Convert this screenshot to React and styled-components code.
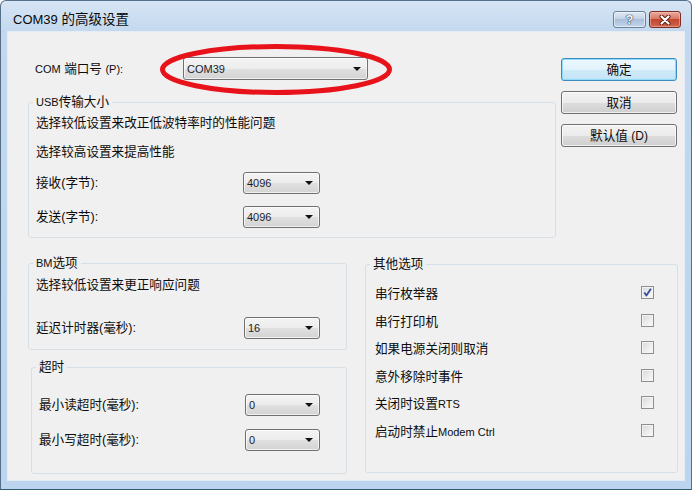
import React from 'react';
import styled, { createGlobalStyle, css } from 'styled-components';

const GlobalStyle = createGlobalStyle`
  html, body { margin: 0; padding: 0; background: #ffffff; }
  body {
    font-family: "Liberation Sans", "Noto Sans CJK SC", sans-serif;
    font-size: 12.6px;
    color: #0c0c0c;
  }
`;

const Window = styled.div`
  position: relative;
  width: 692px;
  height: 490px;
  box-sizing: border-box;
  border: 1px solid #566f88;
  border-bottom-color: #2d5b70;
  border-radius: 6px 6px 0 0;
  background: linear-gradient(180deg, #d6e5f5 0px, #c3d8ee 31px, #bcd4ed 100%);
  padding: 0 7px 9px 7px;
  display: flex;
  flex-direction: column;
  overflow: hidden;
`;

const TitleBar = styled.div`
  height: 31px;
  box-sizing: border-box;
  padding-top: 6px;
  display: flex;
  align-items: center;
  flex: none;
`;

const TitleText = styled.div`
  margin-left: 5px;
  font-size: 13.5px;
  line-height: 18px;
  color: #0a0a0a;
  flex: 1;
`;

const CaptionBtn = styled.div`
  width: ${p => p.$w}px;
  height: 17px;
  box-sizing: border-box;
  border-radius: 3px;
  display: flex;
  align-items: center;
  justify-content: center;
  margin-left: ${p => p.$ml || 0}px;
  ${p => p.$close
    ? css`
        border: 1px solid #7c2d22;
        background: linear-gradient(180deg, #e9aa9f 0%, #d77966 45%, #c4462f 50%, #d0654f 100%);
        box-shadow: inset 0 0 0 1px rgba(255, 210, 200, 0.45);
      `
    : css`
        border: 1px solid #6c8299;
        background: linear-gradient(180deg, #dfe9f5 0%, #c3d4e8 45%, #a9bfd9 50%, #c3d6ec 100%);
        box-shadow: inset 0 0 0 1px rgba(255, 255, 255, 0.5);
      `}
`;

const HelpGlyph = styled.span`
  font-family: "Liberation Sans", sans-serif;
  font-weight: bold;
  font-size: 13px;
  line-height: 13px;
  color: #f5f8fc;
  text-shadow: 0 0 1px #2f3d4d, 0 0 1px #2f3d4d, 0 0 1px #2f3d4d;
`;

const Client = styled.div`
  flex: 1;
  background: #f0f0f0;
  box-shadow: 0 0 0 1px #e4edf6;
  padding: 25px 6px 0 20px;
  display: flex;
  flex-direction: column;
`;

const TopRow = styled.div`
  display: flex;
  gap: 5px;
`;

const BottomRow = styled.div`
  display: flex;
  gap: 18px;
  margin-top: 17px;
`;

const Column = styled.div`
  width: ${p => p.$w}px;
  flex: none;
  display: flex;
  flex-direction: column;
`;

const ButtonColumn = styled.div`
  width: 116px;
  flex: none;
  display: flex;
  flex-direction: column;
  gap: 10px;
  padding-top: 1px;
`;

const ComRow = styled.div`
  display: flex;
  align-items: center;
  height: 23px;
  padding-left: 7px;
`;

const Label = styled.span`
  width: ${p => p.$w}px;
  flex: none;
  white-space: nowrap;
  line-height: 18px;
`;

const Lat = styled.span`
  font-family: "Liberation Sans", sans-serif;
  font-size: ${p => p.$size || 11}px;
`;

const Combo = styled.div`
  width: ${p => p.$w}px;
  height: ${p => p.$h || 22}px;
  box-sizing: border-box;
  border: 1px solid #707070;
  border-radius: 3px;
  background: linear-gradient(180deg, #f4f4f4 0%, #ececec 50%, #e0e0e0 51%, #d3d3d3 100%);
  box-shadow: inset 0 0 0 1px rgba(255, 255, 255, 0.65);
  display: flex;
  align-items: center;
  justify-content: space-between;
  padding: 0 6px 0 3px;
  font-family: "Liberation Sans", sans-serif;
  font-size: 11px;
  color: #1c1c2a;
  flex: none;
`;

const Arrow = styled.span`
  width: 0;
  height: 0;
  border-left: 4px solid transparent;
  border-right: 4px solid transparent;
  border-top: 4px solid #111;
`;

const Button = styled.div`
  height: 23px;
  box-sizing: border-box;
  border: 1px solid #707070;
  border-radius: 3px;
  background: linear-gradient(180deg, #f3f3f3 0%, #ebebeb 50%, #dddddd 51%, #cfcfcf 100%);
  box-shadow: inset 0 0 0 1px rgba(255, 255, 255, 0.7);
  display: flex;
  align-items: center;
  justify-content: center;
  line-height: 18px;
  ${p => p.$primary && css`
    border-color: #3c8cc0;
    background: linear-gradient(180deg, #eef8fe 0%, #e2f3fc 50%, #d0ebf9 51%, #c3e4f6 100%);
    box-shadow: inset 0 0 0 1px #8fdaf8;
  `}
`;

const Group = styled.fieldset`
  margin: ${p => p.$mt || 0}px 0 0 ${p => p.$ml || 0}px;
  padding: 4px ${p => p.$pr ?? 8}px ${p => p.$pb}px ${p => p.$pl ?? 7}px;
  border: 1px solid #d5dfe5;
  border-radius: 3px;
  min-width: 0;
`;

const Legend = styled.legend`
  padding: 0 3px;
  margin-left: ${p => p.$ml ?? -3}px;
  line-height: 16px;
  white-space: nowrap;
`;

const Line = styled.div`
  height: 18px;
  line-height: 18px;
  white-space: nowrap;
  margin-top: ${p => p.$mt || 0}px;
`;

const FieldRow = styled.div`
  display: flex;
  align-items: center;
  margin-top: ${p => p.$mt || 0}px;
`;

const OptionList = styled.div`
  padding-top: 3px;
  display: flex;
  flex-direction: column;
`;

const OptionRow = styled.div`
  height: 27.5px;
  display: flex;
  align-items: center;
  justify-content: space-between;
  white-space: nowrap;
`;

const Check = styled.span`
  width: 13px;
  height: 13px;
  box-sizing: border-box;
  border: 1px solid #8e8f8f;
  background: linear-gradient(135deg, #d6d8db 0%, #eeeeee 60%, #fbfbfb 100%);
  box-shadow: inset 0 0 0 1px #f3f3f3;
  display: flex;
  align-items: center;
  justify-content: center;
  flex: none;
`;

const Overlay = styled.svg`
  position: absolute;
  left: 156px;
  top: 40px;
  pointer-events: none;
`;

function CloseGlyph() {
  return (
    <svg width="12" height="10" viewBox="0 0 12 10">
      <path d="M2.5 1.5 L9.5 8.5 M9.5 1.5 L2.5 8.5" stroke="#5a1a12" strokeWidth="4" strokeLinecap="round" />
      <path d="M2.5 1.5 L9.5 8.5 M9.5 1.5 L2.5 8.5" stroke="#ffffff" strokeWidth="2.2" strokeLinecap="round" />
    </svg>
  );
}

function CheckBox({ checked }) {
  return (
    <Check>
      {checked && (
        <svg width="11" height="11" viewBox="0 0 11 11">
          <path d="M2.3 5.6 L4.4 8.6 L8.9 1.8" fill="none" stroke="#3a4c9c" strokeWidth="1.8" strokeLinejoin="round" />
        </svg>
      )}
    </Check>
  );
}

function Select({ value, w, h }) {
  return (
    <Combo $w={w} $h={h}>
      <span>{value}</span>
      <Arrow />
    </Combo>
  );
}

const options = [
  { label: '串行枚举器', checked: true },
  { label: '串行打印机' },
  { label: '如果电源关闭则取消' },
  { label: '意外移除时事件' },
  { label: <>关闭时设置<Lat>RTS</Lat></> },
  { label: <>启动时禁止<Lat>Modem Ctrl</Lat></> },
];

export default function App() {
  return (
    <>
      <GlobalStyle />
      <Window>
        <TitleBar>
          <TitleText><Lat $size={13}>COM39</Lat> 的高级设置</TitleText>
          <CaptionBtn $w={33}><HelpGlyph>?</HelpGlyph></CaptionBtn>
          <CaptionBtn $w={32} $ml={3} $close><CloseGlyph /></CaptionBtn>
          <span style={{ width: 3 }} />
        </TitleBar>
        <Client>
          <TopRow>
            <Column $w={528}>
              <ComRow>
                <Label $w={148}><Lat>COM</Lat> 端口号 <Lat>(P):</Lat></Label>
                <Select value="COM39" w={185} h={23} />
              </ComRow>
              <Group $mt={14} $pb={9}>
                <Legend><Lat>USB</Lat>传输大小</Legend>
                <Line>选择较低设置来改正低波特率时的性能问题</Line>
                <Line $mt={11}>选择较高设置来提高性能</Line>
                <FieldRow $mt={11}>
                  <Label $w={207}>接收(字节):</Label>
                  <Select value="4096" w={77} />
                </FieldRow>
                <FieldRow $mt={12}>
                  <Label $w={207}>发送(字节):</Label>
                  <Select value="4096" w={77} />
                </FieldRow>
              </Group>
            </Column>
            <ButtonColumn>
              <Button $primary>确定</Button>
              <Button>取消</Button>
              <Button>默认值 <Lat $size={12}>&nbsp;(D)</Lat></Button>
            </ButtonColumn>
          </TopRow>
          <BottomRow>
            <Column $w={319}>
              <Group $pb={10}>
                <Legend><Lat>BM</Lat>选项</Legend>
                <Line $mt={1}>选择较低设置来更正响应问题</Line>
                <FieldRow $mt={23}>
                  <Label $w={208}>延迟计时器(毫秒):</Label>
                  <Select value="16" w={76} />
                </FieldRow>
              </Group>
              <Group $mt={9} $ml={3} $pb={22}>
                <Legend>超时</Legend>
                <FieldRow $mt={15}>
                  <Label $w={206}>最小读超时(毫秒):</Label>
                  <Select value="0" w={75} />
                </FieldRow>
                <FieldRow $mt={13}>
                  <Label $w={206}>最小写超时(毫秒):</Label>
                  <Select value="0" w={75} />
                </FieldRow>
              </Group>
            </Column>
            <Column $w={313}>
              <Group $mt={1} $pl={9} $pr={23} $pb={28}>
                <Legend $ml={-5}>其他选项</Legend>
                <OptionList>
                  {options.map((o, i) => (
                    <OptionRow key={i}>
                      <span>{o.label}</span>
                      <CheckBox checked={o.checked} />
                    </OptionRow>
                  ))}
                </OptionList>
              </Group>
            </Column>
          </BottomRow>
        </Client>
        <Overlay width="238" height="58" viewBox="0 0 238 58">
          <ellipse cx="119" cy="28.5" rx="113.5" ry="23" fill="none" stroke="#e8121b" strokeWidth="5" />
        </Overlay>
      </Window>
    </>
  );
}
